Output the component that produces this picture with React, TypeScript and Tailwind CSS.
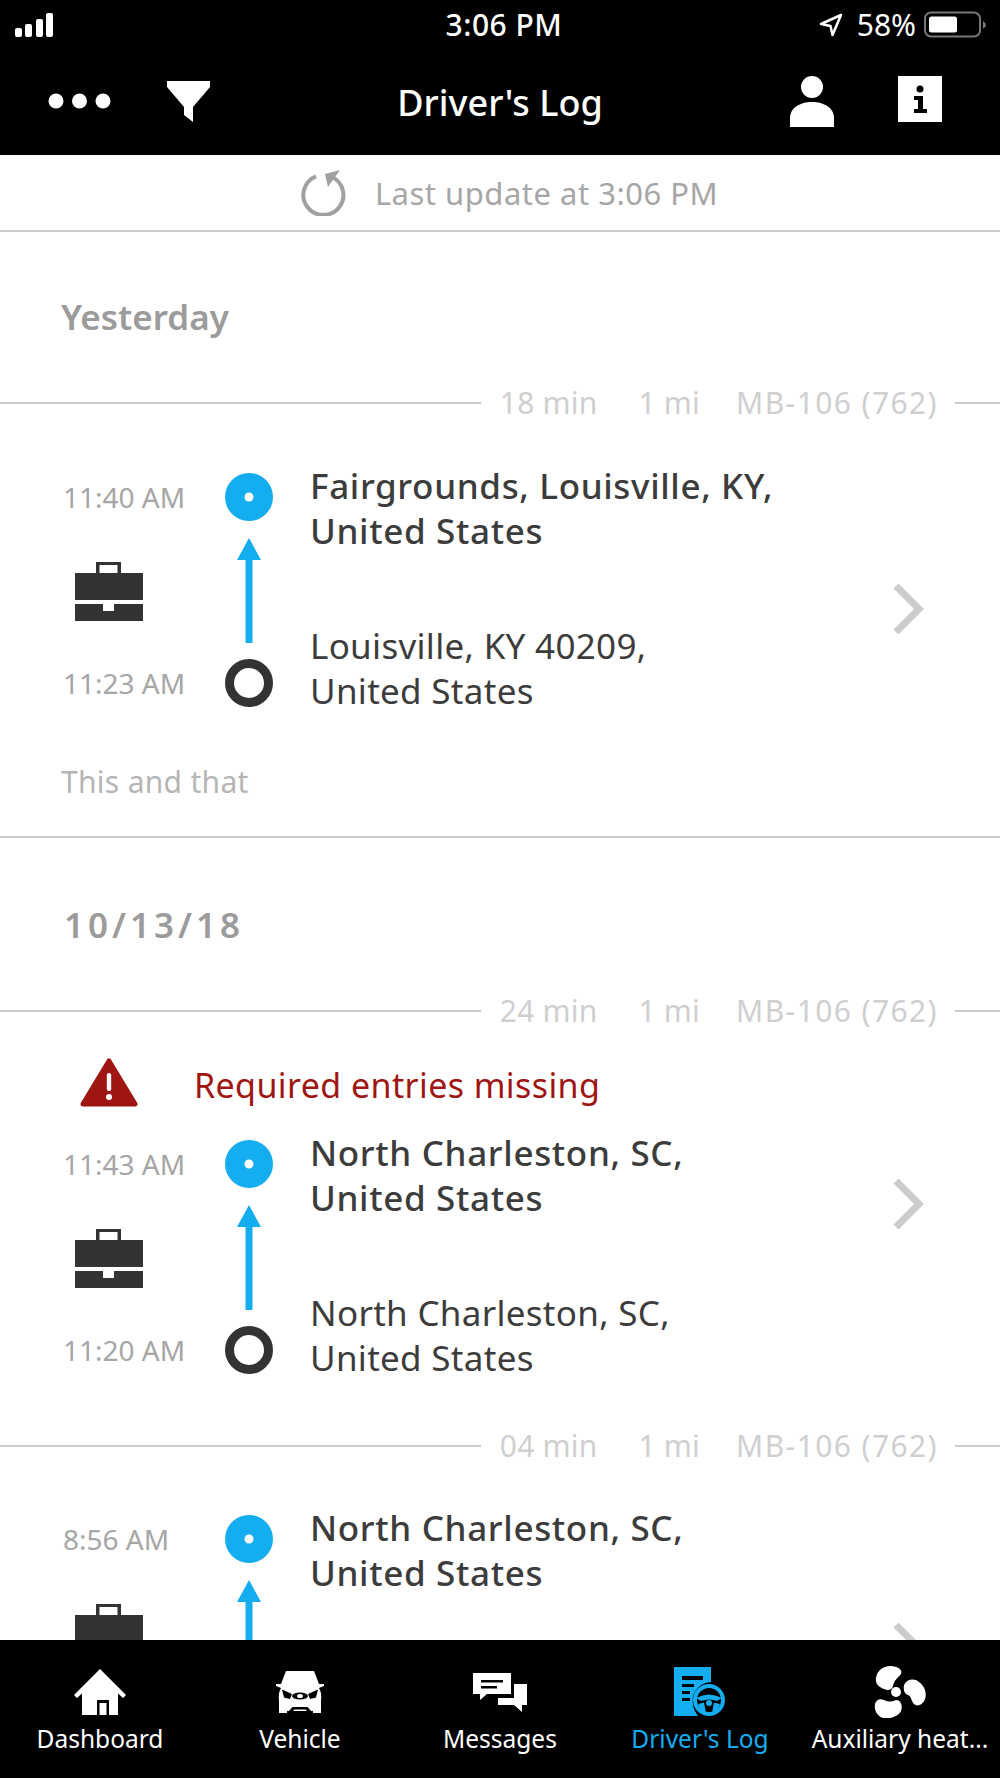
import React from "react";

const Chevron = () => (
  <svg width="34" height="50" viewBox="0 0 34 50" className="shrink-0">
    <path d="M5 2 L28 25 L5 48" fill="none" stroke="#cccccc" strokeWidth="7" />
  </svg>
);

const Briefcase = () => (
  <svg width="70" height="60" viewBox="0 0 70 60" className="block">
    <path fillRule="evenodd" d="M22 0H47V12H22ZM25.500 3V12H43.500V3Z" fill="#333333" />
    <rect x="1" y="11" width="68" height="27" fill="#333333" />
    <path d="M1 42H29V49H40V42H69V59H1Z" fill="#333333" />
  </svg>
);

const Route = () => (
  <svg width="50" height="236" viewBox="0 0 50 236" className="block">
    <circle cx="25" cy="25" r="24" fill="#14adf0" />
    <circle cx="25" cy="25" r="4.500" fill="#ffffff" />
    <path d="M25 66 L37 88 H28.500 V171 H21.500 V88 H13 Z" fill="#14adf0" />
    <circle cx="25" cy="211" r="19.500" fill="none" stroke="#333333" strokeWidth="9" />
  </svg>
);

const Meta = ({ dur }: { dur: string }) => (
  <div className="flex h-[2px] items-center">
    <div className="h-[2px] flex-1 bg-[#cccccc]" />
    <div className="flex items-center bg-white pl-[19px] text-[30px] leading-none text-[#cfcfcf]">
      <span className="tracking-[0.2px]">{dur}</span>
      <span className="ml-[41px] tracking-[0.2px]">1 mi</span>
      <span className="ml-[36px] mr-[17px] tracking-[1.4px]">MB-106 (762)</span>
    </div>
    <div className="h-[2px] w-[45px] bg-[#cccccc]" />
  </div>
);

const Trip = ({ top, bottom, to, from }: { top: string; bottom: string; to: string[]; from: string[] }) => (
  <div className="flex h-[236px]">
    <div className="flex w-[224px] shrink-0 flex-col pl-[63px]">
      <div className="mt-[10px] h-[30px] whitespace-nowrap text-[28px] leading-[30px] text-[#a6a6a6]">{top}</div>
      <div className="ml-[11px] mt-[50px]">
        <Briefcase />
      </div>
      <div className="mt-[46px] h-[30px] whitespace-nowrap text-[28px] leading-[30px] text-[#a6a6a6]">{bottom}</div>
    </div>
    <div className="w-[86px] shrink-0">
      <Route />
    </div>
    <div className="flex flex-col text-[35px] leading-[45px] text-[#3c3c3c]">
      <div className="-mt-[9px] font-medium tracking-[0.65px]">
        {to.map((t) => (
          <div key={t}>{t}</div>
        ))}
      </div>
      <div className="mt-[70px] tracking-[0.3px]">
        {from.map((t) => (
          <div key={t}>{t}</div>
        ))}
      </div>
    </div>
  </div>
);

export default function App() {
  return (
    <div className="flex h-[1778px] w-[1000px] flex-col overflow-hidden bg-white font-['Noto_Sans',sans-serif]">
      <header className="h-[155px] shrink-0 bg-black text-white">
        <div className="relative flex h-[50px] items-center justify-between pl-[15px] pr-[10px]">
          <svg width="38" height="24" viewBox="0 0 38 24" className="block">
            <rect x="0" y="15" width="7" height="9" rx="2" fill="#fff" />
            <rect x="10" y="11" width="7" height="13" rx="2" fill="#fff" />
            <rect x="21" y="6" width="7" height="18" rx="2" fill="#fff" />
            <rect x="31" y="0" width="7" height="24" rx="2" fill="#fff" />
          </svg>
          <div className="absolute left-0 right-0 pl-[8px] text-center text-[30px] font-medium leading-[30px] tracking-[0.5px]">3:06 PM</div>
          <div className="flex items-center">
            <svg width="24" height="24" viewBox="0 0 24 24" className="block">
              <path d="M22 2 L2 11 L11.500 13 L13.500 22 Z" fill="none" stroke="#fff" strokeWidth="2.500" strokeLinejoin="round" />
            </svg>
            <span className="ml-[14px] text-[30px] leading-[30px]">58%</span>
            <svg width="66" height="28" viewBox="0 0 66 28" className="ml-[8px] block">
              <rect x="1" y="1.500" width="55" height="24" rx="6" fill="none" stroke="#777" strokeWidth="2" />
              <rect x="5" y="5.500" width="28" height="16" rx="2.500" fill="#fff" />
              <path d="M59 10 Q62 12 62 14 Q62 16 59 18 Z" fill="#777" />
            </svg>
          </div>
        </div>
        <div className="relative flex h-[104px] items-start">
          <svg width="220" height="50" viewBox="0 0 220 50" className="mt-[29px] block">
            <circle cx="56" cy="22" r="7.500" fill="#fff" />
            <circle cx="79.500" cy="22" r="7.500" fill="#fff" />
            <circle cx="103" cy="22" r="7.500" fill="#fff" />
            <path d="M167 2 H210 V8 L193 28 V43 L184 36 V28 L167 8 Z" fill="#fff" />
          </svg>
          <div className="absolute left-0 right-0 top-[31px] text-center text-[36px] font-medium leading-[44px]">Driver's Log</div>
          <div className="ml-auto mr-[58px] mt-[26px] flex items-start">
            <svg width="44" height="52" viewBox="0 0 44 52" className="block">
              <circle cx="22" cy="11" r="11" fill="#fff" />
              <path d="M0 51 V42 C0 32 10 26 22 26 C34 26 44 32 44 42 V51 Z" fill="#fff" />
            </svg>
            <svg width="44" height="46" viewBox="0 0 44 46" className="ml-[64px] block">
              <rect width="44" height="46" fill="#fff" />
              <circle cx="22" cy="13" r="3.500" fill="#000" />
              <path d="M16 20 H25 V33 H29 V37 H16 V33 H20 V24 H16 Z" fill="#000" />
            </svg>
          </div>
        </div>
      </header>

      <main className="min-h-0 flex-1 overflow-hidden">
        <div className="flex h-[77px] items-center justify-center border-b-2 border-[#cccccc] pl-[18px]">
          <svg width="46" height="46" viewBox="0 0 46 46" className="mr-[29px] block">
            <path d="M16 6.400 A20 20 0 1 0 31 6.500" fill="none" stroke="#a0a0a0" strokeWidth="4" />
            <path d="M40 0 L25 4 L28 17 Z" fill="#a0a0a0" />
          </svg>
          <span className="text-[31px] leading-[40px] tracking-[0.5px] text-[#a6a6a6]">Last update at 3:06 PM</span>
        </div>

        <div className="h-[170px] pl-[61px] pt-[65px] text-[35px] font-semibold leading-[40px] text-[#9b9b9b]">Yesterday</div>
        <Meta dur="18 min" />
        <div className="flex h-[432px] flex-col pt-[68px]">
          <div className="relative">
            <Trip top="11:40 AM" bottom="11:23 AM" to={["Fairgrounds, Louisville, KY,", "United States"]} from={["Louisville, KY 40209,", "United States"]} />
            <div className="absolute right-[75px] top-[112px]">
              <Chevron />
            </div>
          </div>
          <div className="ml-[61px] mt-[54px] text-[30px] leading-[40px] tracking-[0.3px] text-[#b5b5b5]">This and that</div>
        </div>
        <div className="h-[2px] bg-[#cccccc]" />

        <div className="h-[172px] pl-[64px] pt-[67px] text-[35px] font-semibold leading-[40px] tracking-[4px] text-[#9b9b9b]">10/13/18</div>
        <Meta dur="24 min" />
        <div className="flex h-[433px] flex-col">
          <div className="mt-[48px] flex h-[50px] items-center">
            <svg width="58" height="50" viewBox="0 0 58 50" className="-mt-[4px] ml-[80px] block">
              <path d="M29 3 L55 46 H3 Z" fill="#9f1512" stroke="#9f1512" strokeWidth="5" strokeLinejoin="round" />
              <rect x="26.800" y="15" width="4.400" height="18" rx="2" fill="#fff" />
              <circle cx="29" cy="39" r="3" fill="#fff" />
            </svg>
            <span className="ml-[56px] text-[34px] leading-[44px] tracking-[0.4px] text-[#9f1512]">Required entries missing</span>
          </div>
          <div className="relative mt-[29px]">
            <Trip top="11:43 AM" bottom="11:20 AM" to={["North Charleston, SC,", "United States"]} from={["North Charleston, SC,", "United States"]} />
            <div className="absolute right-[75px] top-[40px]">
              <Chevron />
            </div>
          </div>
        </div>
        <Meta dur="04 min" />
        <div className="relative mt-[67px]">
          <Trip top="8:56 AM" bottom="" to={["North Charleston, SC,", "United States"]} from={[]} />
          <div className="absolute right-[75px] top-[109px]">
            <Chevron />
          </div>
        </div>
      </main>

      <nav className="flex h-[138px] shrink-0 bg-black pt-[24px]">
        {[
          {
            label: "Dashboard",
            icon: (
              <svg width="54" height="46" viewBox="0 0 54 46" className="block">
                <path d="M27 0 L53 26 L50 29 L45 24.500 V46 H9 V24.500 L4 29 L1 26 Z" fill="#fff" />
                <path fillRule="evenodd" d="M24 31 H36 V46 H33.500 V34 H26.500 V46 H24 Z" fill="#000" />
              </svg>
            ),
          },
          {
            label: "Vehicle",
            icon: (
              <svg width="50" height="42" viewBox="0 0 50 42" className="block">
                <path d="M11 0 H39 L44 13 H49 V15 L44 17 Q47 22 46 30 V42 H38 V40 H12 V42 H4 V30 Q3 22 6 17 L1 15 V13 H6 Z" fill="#fff" />
                <path d="M7 18.500 L17 23 L15 28 L9 26.500 Z M43 18.500 L33 23 L35 28 L41 26.500 Z" fill="#000" />
                <ellipse cx="25" cy="25" rx="8" ry="3.500" fill="#000" />
                <ellipse cx="25" cy="25" rx="3" ry="2" fill="#fff" />
                <path d="M14 40 L17.500 36 H32.500 L36 40 H32 L30.500 38.500 H19.500 L18 40 Z" fill="#000" />
              </svg>
            ),
          },
          {
            label: "Messages",
            icon: (
              <svg width="54" height="42" viewBox="0 0 54 42" className="block">
                <path fillRule="evenodd" d="M0 2 H38 V23 H14 L7 29 V23 H0 Z M8 9 V11.500 H30 V9 Z M8 15 V17.500 H24 V15 Z" fill="#fff" />
                <path d="M41 13 H54 V34 H49 V41 L41 34 H25 V27 H41 Z" fill="#fff" />
              </svg>
            ),
          },
          {
            label: "Driver's Log",
            active: true,
            icon: (
              <svg width="52" height="50" viewBox="0 0 52 50" className="block">
                <path fillRule="evenodd" d="M0 0 H37 V15 Q24 16 19 29 Q17 40 24 49 H0 Z M8 9 V13 H29 V9 Z M8 17 V20 H20 V17 Z M8 24 V27 H16 V24 Z M8 31 V34 H16 V31 Z" fill="#14adf0" />
                <circle cx="35" cy="33" r="14" fill="none" stroke="#14adf0" strokeWidth="4" />
                <path d="M22 31 Q35 24 48 31 L43 34 Q35 31 27 34 Z M24 37 L30 35.500 L32 46 Q26 44 24 37 Z M46 37 L40 35.500 L38 46 Q44 44 46 37 Z" fill="#14adf0" />
                <circle cx="35" cy="36" r="3" fill="#14adf0" />
              </svg>
            ),
          },
          {
            label: "Auxiliary heat...",
            icon: (
              <svg width="52" height="52" viewBox="0 0 52 52" className="block">
                <path d="M2 12 C3 4 10 0 16 0 C24 0 29 4 27 8 C24 12 20 14 19 20 C18 24 14 25 10 23 C5 21 1 18 2 12 Z" fill="#fff" />
                <path d="M30 19 C33 13 40 12 45 16 C51 20 53 28 51 33 C49 39 43 41 40 38 C37 35 38 31 34 29 C31 28 29 25 30 19 Z" fill="#fff" />
                <path d="M1 38 C2 34 6 32 10 34 C14 36 18 36 22 34 C27 34 29 40 27 45 C24 51 15 53 9 52 C3 50 0 44 1 38 Z" fill="#fff" />
                <circle cx="22" cy="26" r="5" fill="#fff" />
              </svg>
            ),
          },
        ].map((item) => (
          <div key={item.label} className="flex w-[200px] flex-col items-center">
            <div className="flex h-[56px] items-center justify-center">{item.icon}</div>
            <div className={`mt-[4px] whitespace-nowrap text-[24.5px] leading-[30px] ${item.active ? "text-[#14adf0]" : "text-white"}`}>{item.label}</div>
          </div>
        ))}
      </nav>
    </div>
  );
}
